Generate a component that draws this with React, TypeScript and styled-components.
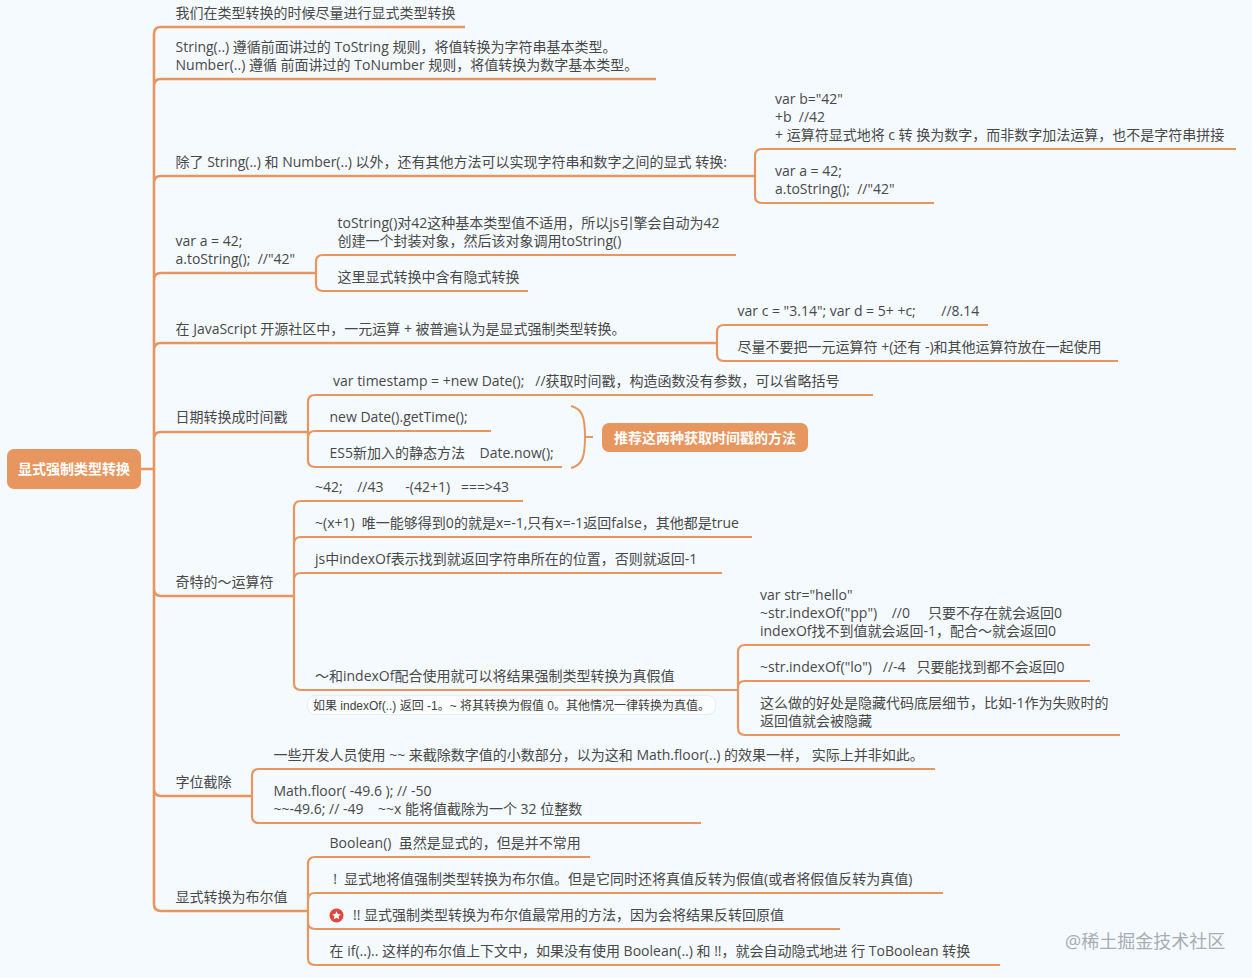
import React from "react";
import styled, { createGlobalStyle } from "styled-components";

const LINE = "#e8965f";
const INK = "#484848";

const Global = createGlobalStyle`
  html, body { margin: 0; padding: 0; background: #f5faff; }
`;

const Canvas = styled.div`
  position: relative;
  width: 1252px;
  height: 978px;
  overflow: hidden;
  background: #f5faff;
  font-family: "Open Sans", "Noto Sans CJK SC", sans-serif;
  color: ${INK};
`;

const Wires = styled.svg`
  position: absolute;
  left: 0;
  top: 0;
  width: 1252px;
  height: 978px;
  fill: none;
  stroke: ${LINE};
`;

const Topic = styled.div<{ $x: number; $y: number }>`
  position: absolute;
  left: ${(p) => p.$x}px;
  top: ${(p) => p.$y - 9}px;
  font-size: 14px;
  line-height: 18px;
  white-space: pre;
  display: flex;
  align-items: center;
`;

const Solid = styled.div`
  position: absolute;
  box-sizing: border-box;
  padding-bottom: 2px;
  display: flex;
  align-items: center;
  justify-content: center;
  background: ${LINE};
  border-radius: 7px;
  color: #fff;
  font-size: 14px;
  font-weight: 700;
  white-space: pre;
`;

const RootTopic = styled(Solid)`
  left: 7px;
  top: 449px;
  width: 134px;
  height: 40px;
`;

const Callout = styled(Solid)`
  left: 602px;
  top: 423px;
  width: 206px;
  height: 29px;
`;

const Note = styled.div`
  position: absolute;
  left: 307px;
  top: 695px;
  width: 409px;
  height: 20px;
  box-sizing: border-box;
  padding: 0 0 2px 5px;
  display: flex;
  align-items: center;
  background: #fbfdff;
  border: 1px solid #e8edf1;
  border-radius: 8px;
  font-family: "Liberation Sans", "Noto Sans CJK SC", sans-serif;
  font-size: 12px;
  color: #3e3e3e;
  white-space: pre;
`;

const Watermark = styled.div`
  position: absolute;
  left: 1065px;
  top: 930px;
  font-size: 18px;
  line-height: 22px;
  color: #a8adb2;
  white-space: pre;
`;

const StarIcon = styled.svg`
  width: 15px;
  height: 15px;
  margin-right: 9px;
  flex: none;
`;

type Wire = { x: number; parent: number; from?: number; stroke?: number; ends: [number, number][] };

const wires: Wire[] = [
  {
    x: 154, parent: 469, from: 141, stroke: 2.6,
    ends: [[27, 465], [79, 656], [176, 755], [273, 316], [343, 717], [432, 308], [596, 294], [796, 252], [911, 308]],
  },
  { x: 755, parent: 176, ends: [[149, 1236], [203, 934]] },
  { x: 316, parent: 273, ends: [[255, 736], [291, 528]] },
  { x: 717, parent: 343, ends: [[325, 988], [361, 1118]] },
  { x: 308, parent: 432, ends: [[395, 873], [431, 491], [467, 562]] },
  { x: 294, parent: 596, ends: [[501, 523], [537, 752], [573, 722], [690, 738]] },
  { x: 738, parent: 690, ends: [[645, 1090], [681, 1090], [735, 1120]] },
  { x: 252, parent: 796, ends: [[769, 935], [823, 701]] },
  { x: 308, parent: 911, ends: [[857, 590], [893, 943], [929, 840], [965, 1000]] },
];

const R = 7;

function wirePath(w: Wire) {
  const ys = w.ends.map((e) => e[0]);
  const top = Math.min(...ys);
  const bottom = Math.max(...ys);
  let d = `M${w.x} ${top + R}V${bottom - R}`;
  for (const [y, end] of w.ends) {
    if (y === w.parent) {
      d += `M${w.x} ${y}H${end}`;
    } else {
      const dir = y < w.parent ? R : -R;
      d += `M${w.x} ${y + dir}Q${w.x} ${y} ${w.x + R} ${y}H${end}`;
    }
  }
  if (w.from !== undefined) d += `M${w.from} ${w.parent}H${w.x}`;
  return d;
}

const topics: { x: number; y: number; t: string }[] = [
  { x: 175.5, y: 13, t: "我们在类型转换的时候尽量进行显式类型转换" },
  { x: 175.5, y: 47, t: "String(..) 遵循前面讲过的 ToString 规则，将值转换为字符串基本类型。\nNumber(..) 遵循 前面讲过的 ToNumber 规则，将值转换为数字基本类型。" },
  { x: 175.5, y: 162, t: "除了 String(..) 和 Number(..) 以外，还有其他方法可以实现字符串和数字之间的显式 转换:" },
  { x: 775, y: 99, t: "var b=\"42\"\n+b  //42\n+ 运算符显式地将 c 转 换为数字，而非数字加法运算，也不是字符串拼接" },
  { x: 775, y: 171, t: "var a = 42;\na.toString();  //\"42\"" },
  { x: 175.5, y: 241, t: "var a = 42;\na.toString();  //\"42\"" },
  { x: 337.5, y: 223, t: "toString()对42这种基本类型值不适用，所以js引擎会自动为42\n创建一个封装对象，然后该对象调用toString()" },
  { x: 337.5, y: 277, t: "这里显式转换中含有隐式转换" },
  { x: 175.5, y: 329, t: "在 JavaScript 开源社区中，一元运算 + 被普遍认为是显式强制类型转换。" },
  { x: 737.5, y: 311, t: "var c = \"3.14\"; var d = 5+ +c;       //8.14" },
  { x: 737.5, y: 347, t: "尽量不要把一元运算符 +(还有 -)和其他运算符放在一起使用" },
  { x: 175.5, y: 417, t: "日期转换成时间戳" },
  { x: 333, y: 381, t: "var timestamp = +new Date();   //获取时间戳，构造函数没有参数，可以省略括号" },
  { x: 329.5, y: 417, t: "new Date().getTime();" },
  { x: 329.5, y: 453, t: "ES5新加入的静态方法    Date.now();" },
  { x: 175.5, y: 582, t: "奇特的～运算符" },
  { x: 315, y: 487, t: "~42;    //43      -(42+1)   ===>43" },
  { x: 315, y: 523, t: "~(x+1)  唯一能够得到0的就是x=-1,只有x=-1返回false，其他都是true" },
  { x: 315, y: 559, t: "js中indexOf表示找到就返回字符串所在的位置，否则就返回-1" },
  { x: 315, y: 676, t: "～和indexOf配合使用就可以将结果强制类型转换为真假值" },
  { x: 760, y: 595, t: "var str=\"hello\"\n~str.indexOf(\"pp\")    //0     只要不存在就会返回0\nindexOf找不到值就会返回-1，配合～就会返回0" },
  { x: 760, y: 667, t: "~str.indexOf(\"lo\")   //-4   只要能找到都不会返回0" },
  { x: 760, y: 703, t: "这么做的好处是隐藏代码底层细节，比如-1作为失败时的\n返回值就会被隐藏" },
  { x: 175.5, y: 782, t: "字位截除" },
  { x: 273.5, y: 755, t: "一些开发人员使用 ~~ 来截除数字值的小数部分，以为这和 Math.floor(..) 的效果一样， 实际上并非如此。" },
  { x: 273.5, y: 791, t: "Math.floor( -49.6 ); // -50\n~~-49.6; // -49    ~~x 能将值截除为一个 32 位整数" },
  { x: 175.5, y: 897, t: "显式转换为布尔值" },
  { x: 329.5, y: 843, t: "Boolean()  虽然是显式的，但是并不常用" },
  { x: 329.5, y: 879, t: " !  显式地将值强制类型转换为布尔值。但是它同时还将真值反转为假值(或者将假值反转为真值)" },
  { x: 329.5, y: 951, t: "在 if(..).. 这样的布尔值上下文中，如果没有使用 Boolean(..) 和 !!，就会自动隐式地进 行 ToBoolean 转换" },
];

export default function App() {
  return (
    <Canvas>
      <Global />
      <Wires viewBox="0 0 1252 978">
        {wires.map((w) => (
          <path key={`${w.x}-${w.parent}`} d={wirePath(w)} strokeWidth={w.stroke ?? 2.2} />
        ))}
        <path d="M571 406C582 409 585 416 585 437C585 458 582 465 571 468M585 437H593" strokeWidth={2} />
      </Wires>
      <RootTopic>显式强制类型转换</RootTopic>
      <Callout>推荐这两种获取时间戳的方法</Callout>
      {topics.map((n) => (
        <Topic key={`${n.x}-${n.y}`} $x={n.x} $y={n.y}>
          {n.t}
        </Topic>
      ))}
      <Topic $x={329} $y={915}>
        <StarIcon viewBox="0 0 15 15">
          <circle cx="7.5" cy="7.5" r="7" fill="#e0483e" />
          <path d="M7.5 3.2l1.3 2.8 3 .3-2.2 2 .6 3-2.7-1.5-2.7 1.5.6-3-2.2-2 3-.3z" fill="#fff" />
        </StarIcon>
        !! 显式强制类型转换为布尔值最常用的方法，因为会将结果反转回原值
      </Topic>
      <Note>如果 indexOf(..) 返回 -1。~ 将其转换为假值 0。其他情况一律转换为真值。</Note>
      <Watermark>@稀土掘金技术社区</Watermark>
    </Canvas>
  );
}
